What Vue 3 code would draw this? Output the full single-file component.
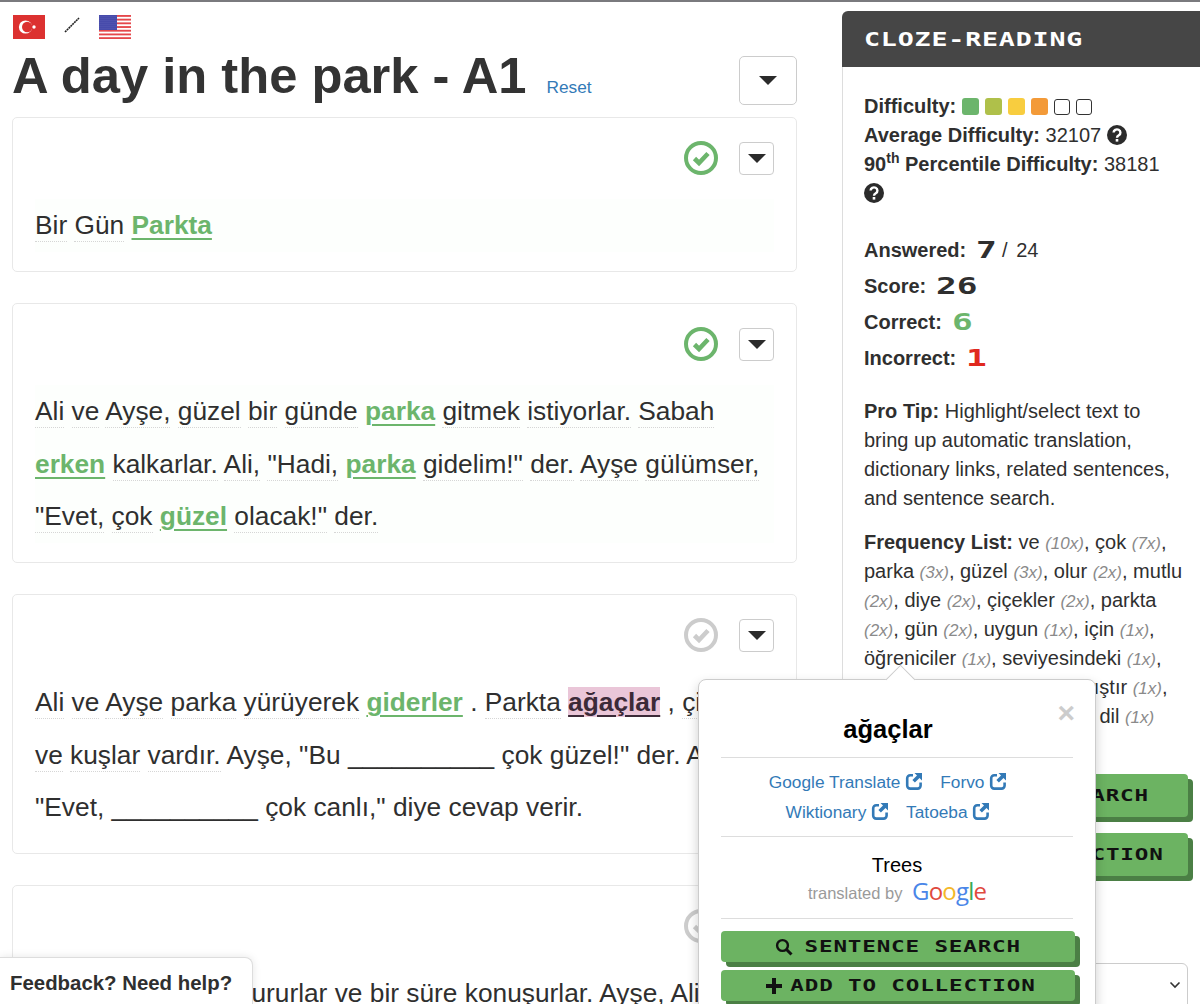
<template>
  <div class="page">
    <main class="reader">
      <div class="flags">
        <svg class="flag" viewBox="0 0 32 24">
          <rect width="32" height="24" fill="#dc3130" />
          <circle cx="12.5" cy="12" r="6.6" fill="#fff" />
          <circle cx="14.2" cy="12" r="5.2" fill="#dc3130" />
          <circle cx="21" cy="12" r="1.7" fill="#fff" />
        </svg>
        <svg class="slash" viewBox="0 0 16 16">
          <line x1="1" y1="15" x2="15" y2="1" stroke="#222" stroke-width="1.6" stroke-dasharray="2 0.6" />
        </svg>
        <svg class="flag" viewBox="0 0 32 24">
          <defs>
            <pattern id="stars" width="2" height="2" patternUnits="userSpaceOnUse">
              <rect width="2" height="2" fill="#33379f" />
              <circle cx="1" cy="1" r="0.55" fill="#9ea3e0" />
            </pattern>
          </defs>
          <rect width="32" height="24" fill="#fff" />
          <rect v-for="n in 7" :key="n" x="0" :y="(n - 1) * 3.7" width="32" height="1.85" fill="#e5474b" />
          <rect width="18" height="15" fill="url(#stars)" />
        </svg>
      </div>

      <div class="title-row">
        <h1>A day in the park - A1</h1>
        <a class="reset">Reset</a>
        <button class="caret-btn big"><span class="caret"></span></button>
      </div>

      <section v-for="(card, i) in cards" :key="i" class="card">
        <div class="card-head">
          <svg class="check" :class="{ done: card.done }" viewBox="0 0 34 34">
            <circle cx="17" cy="17" r="15" fill="none" stroke="currentColor" stroke-width="4" />
            <polyline points="10.5,17.5 15,22 24,12.5" fill="none" stroke="currentColor" stroke-width="4.6" />
          </svg>
          <button class="caret-btn"><span class="caret"></span></button>
        </div>
        <p class="story" :class="{ tinted: card.done }">
          <template v-for="(w, j) in card.words" :key="j"><span :class="w.cls">{{ w.text }}</span>{{ ' ' }}</template>
        </p>
      </section>
    </main>

    <aside class="side">
      <div class="side-head"><span class="pixel wide head-text">CLOZE-READING</span></div>
      <div class="side-body">
        <div class="stats">
          <div class="difficulty">
            <b>Difficulty:</b>
            <span v-for="c in levels" :key="c" class="level" :style="{ background: c }"></span>
            <span class="level empty"></span>
            <span class="level empty"></span>
          </div>
          <div><b>Average Difficulty:</b> 32107 <svg class="help" viewBox="0 0 20 20"><circle cx="10" cy="10" r="10" fill="#2b2b2b" /><path d="M6.6 7.6a3.4 3.2 0 1 1 5.2 2.7c-1.2.7-1.8 1.2-1.8 2.4" fill="none" stroke="#fff" stroke-width="2.4" /><rect x="8.7" y="14" width="2.6" height="2.6" fill="#fff" /></svg></div>
          <div><b>90<sup>th</sup> Percentile Difficulty:</b> 38181 <svg class="help" viewBox="0 0 20 20"><circle cx="10" cy="10" r="10" fill="#2b2b2b" /><path d="M6.6 7.6a3.4 3.2 0 1 1 5.2 2.7c-1.2.7-1.8 1.2-1.8 2.4" fill="none" stroke="#fff" stroke-width="2.4" /><rect x="8.7" y="14" width="2.6" height="2.6" fill="#fff" /></svg></div>
        </div>

        <div class="scores">
          <div><b>Answered:</b><span class="pixel num">7</span><span class="total">/ 24</span></div>
          <div><b>Score:</b><span class="pixel num">26</span></div>
          <div><b>Correct:</b><span class="pixel num good">6</span></div>
          <div><b>Incorrect:</b><span class="pixel num bad">1</span></div>
        </div>

        <p class="tip"><b>Pro Tip:</b> Highlight/select text to bring up automatic translation, dictionary links, related sentences, and sentence search.</p>

        <p class="freq">
          <b>Frequency List:</b>{{ ' ' }}
          <template v-for="(f, i) in frequency" :key="f[0]">{{ f[0] }} <i>({{ f[1] }}x)</i>{{ i < frequency.length - 1 ? ', ' : '' }}</template>
        </p>

        <button class="game-btn first">
          <svg class="btn-icon" viewBox="0 0 18 18"><circle cx="7.5" cy="7.5" r="5.4" fill="none" stroke="#111" stroke-width="2.4" /><line x1="11.5" y1="11.5" x2="16.5" y2="16.5" stroke="#111" stroke-width="3" /></svg>
          <span class="pixel wide">SENTENCE SEARCH</span>
        </button>
        <button class="game-btn second">
          <svg class="btn-icon" viewBox="0 0 18 18"><path d="M7 1h4v6h6v4h-6v6H7v-6H1V7h6z" fill="#111" /></svg>
          <span class="pixel wide">ADD TO COLLECTION</span>
        </button>

        <div class="select-box">
          <svg viewBox="0 0 12 8"><polyline points="1.5,1.5 6,6 10.5,1.5" fill="none" stroke="#333" stroke-width="1.6" /></svg>
        </div>
      </div>
    </aside>

    <div class="popover">
      <span class="pop-arrow"></span>
      <span class="pop-close">×</span>
      <div class="pop-word">ağaçlar</div>
      <hr />
      <div class="pop-links">
        <div v-for="(row, i) in linkRows" :key="i" class="link-row">
          <a v-for="l in row" :key="l">{{ l }}
            <svg class="ext" viewBox="0 0 18 18">
              <path d="M8 3.2H5.2a3 3 0 0 0-3 3v7.4a3 3 0 0 0 3 3h7.4a3 3 0 0 0 3-3v-3" fill="none" stroke="currentColor" stroke-width="2.6" />
              <path d="M9.5 1h7.5v7.5l-2.5-2.5-4.6 4.6-2.5-2.5 4.6-4.6z" fill="currentColor" />
            </svg>
          </a>
        </div>
      </div>
      <hr />
      <div class="pop-trans">
        <div class="trees">Trees</div>
        <div class="by">translated by <span class="google"><span class="g-b">G</span><span class="g-r">o</span><span class="g-y">o</span><span class="g-b">g</span><span class="g-g">l</span><span class="g-r">e</span></span></div>
      </div>
      <hr />
      <button class="game-btn small">
        <svg class="btn-icon" viewBox="0 0 18 18"><circle cx="7.5" cy="7.5" r="5.4" fill="none" stroke="#111" stroke-width="2.4" /><line x1="11.5" y1="11.5" x2="16.5" y2="16.5" stroke="#111" stroke-width="3" /></svg>
        <span class="pixel wide">SENTENCE SEARCH</span>
      </button>
      <button class="game-btn small">
        <svg class="btn-icon" viewBox="0 0 18 18"><path d="M7 1h4v6h6v4h-6v6H7v-6H1V7h6z" fill="#111" /></svg>
        <span class="pixel wide">ADD TO COLLECTION</span>
      </button>
    </div>

    <div class="feedback">Feedback? Need help?</div>
  </div>
</template>

<script setup>
// prefix: * correct answer, ! selected wrong answer, ~ plain word, none = dotted word
const parse = (str) =>
  str.split(' ').map((raw) => {
    if (raw[0] === '*') return { text: raw.slice(1), cls: 'correct' }
    if (raw[0] === '!') return { text: raw.slice(1), cls: 'selected' }
    if (raw[0] === '~') return { text: raw.slice(1), cls: '' }
    return { text: raw, cls: 'word' }
  })

const blank = '~__________'

const cards = [
  { done: true, words: parse('Bir Gün *Parkta') },
  {
    done: true,
    words: parse('Ali ve Ayşe, güzel bir günde *parka gitmek istiyorlar. Sabah *erken kalkarlar. Ali, "Hadi, *parka gidelim!" der. Ayşe gülümser, "Evet, çok *güzel olacak!" der.')
  },
  {
    done: false,
    words: parse(`Ali ve Ayşe parka yürüyerek *giderler ~. Parkta !ağaçlar ~, çiçekler ve kuşlar vardır. ~Ayşe, ~"Bu ${blank} ~çok ~güzel!" ~der. ~Ali, ~"Evet, ${blank} ~çok ~canlı," ~diye ~cevap ~verir.`)
  },
  {
    done: false,
    words: parse('~Sonra ~bir ~parkta ~otururlar ~ve ~bir ~süre ~konuşurlar. ~Ayşe, ~Ali\'ye ~bakar.')
  }
]

const levels = ['#6cb56c', '#afc04a', '#f8cd3f', '#f39a38']

const frequency = [
  ['ve', 10], ['çok', 7], ['parka', 3], ['güzel', 3], ['olur', 2], ['mutlu', 2], ['diye', 2],
  ['çiçekler', 2], ['parkta', 2], ['gün', 2], ['uygun', 1], ['için', 1], ['öğreniciler', 1],
  ['seviyesindeki', 1], ['A1', 1], ['yol', 1], ['hazırlanmıştır', 1], ['türkçe', 1], ['öğrenenin', 1], ['dil', 1]
]

const linkRows = [
  ['Google Translate', 'Forvo'],
  ['Wiktionary', 'Tatoeba']
]
</script>

<style>
html, body {
  margin: 0;
  background: #fff;
}
</style>

<style scoped>
.page {
  position: relative;
  display: flex;
  height: 1004px;
  overflow: hidden;
  box-sizing: border-box;
  border-top: 2px solid #7a7a7e;
  font-family: "Liberation Sans", Arial, sans-serif;
  color: #2f2f2f;
}

.reader {
  width: 785px;
  margin-left: 12px;
  flex-shrink: 0;
}

.flags {
  display: flex;
  align-items: center;
  gap: 19px;
  padding: 13px 0 0 1px;
}

.flag {
  width: 32px;
  height: 24px;
}

.slash {
  width: 16px;
  height: 16px;
  margin-bottom: 4px;
}

.title-row {
  display: flex;
  align-items: center;
  height: 50px;
  margin-top: 16px;
  margin-bottom: 12px;
}

h1 {
  margin: 0 0 8px;
  font-size: 50.7px;
  line-height: 50px;
  font-weight: 700;
  color: #333;
  white-space: nowrap;
}

.reset {
  margin: 15px 0 0 20px;
  font-size: 17.3px;
  color: #337ab7;
}

.caret-btn {
  display: flex;
  align-items: center;
  justify-content: center;
  width: 35px;
  height: 33px;
  padding: 0;
  background: #fff;
  border: 1px solid #ccc;
  border-radius: 4px;
}

.caret-btn.big {
  width: 58px;
  height: 49px;
  margin-left: auto;
  border-radius: 5px;
}

.caret {
  width: 0;
  height: 0;
  border-left: 9px solid transparent;
  border-right: 9px solid transparent;
  border-top: 9px solid #2b2b2b;
}

.card {
  box-sizing: border-box;
  padding: 23px 22px 19.5px;
  margin-bottom: 31px;
  border: 1px solid #e8e8e8;
  border-radius: 5px;
  background: #fff;
}

.card-head {
  display: flex;
  align-items: center;
  justify-content: flex-end;
  gap: 21px;
  margin-bottom: 24px;
}

.check {
  width: 34px;
  height: 34px;
  color: #ccc;
}

.check.done {
  color: #6cb56c;
}

.story {
  margin: 0;
  font-size: 26.3px;
  line-height: 52.5px;
  color: #2f2f2f;
}

.story.tinted {
  background: #fdfffd;
}

.word {
  border-bottom: 1px dotted #d6d6d6;
  padding-bottom: 1px;
}

.correct {
  font-weight: 700;
  color: #6cb56c;
  text-decoration: underline solid #6cb56c 2px;
  text-underline-offset: 4px;
}

.selected {
  font-weight: 700;
  color: #3c2a38;
  background: #eac6d8;
  text-decoration: underline solid #3c2a38 2px;
  text-underline-offset: 4px;
}

.side {
  width: 358px;
  margin: 9px 0 0 45px;
  flex-shrink: 0;
  font-size: 20px;
  line-height: 29px;
}

.side-head {
  display: flex;
  align-items: center;
  height: 56px;
  padding-left: 22px;
  background: #464646;
  border-top-left-radius: 6px;
  color: #fff;
}

.side-body {
  box-sizing: border-box;
  padding: 25px 17px 0 21px;
  border-left: 1px solid #ddd;
  height: 940px;
}

.pixel {
  font-family: "DejaVu Sans Mono", monospace;
  font-weight: 700;
}

.wide {
  display: inline-block;
  margin: 0 31px;
  font-size: 16px;
  line-height: 1;
  letter-spacing: 0.6px;
  white-space: nowrap;
  transform: scaleX(1.41);
}

.head-text {
  margin: 0;
  font-size: 19px;
  transform: scaleX(1.4);
  transform-origin: left center;
}

.difficulty {
  display: flex;
  align-items: center;
  gap: 6px;
}

.level {
  width: 17px;
  height: 17px;
  border-radius: 3px;
}

.level.empty {
  box-sizing: border-box;
  width: 16px;
  height: 16px;
  border: 1px solid #333;
}

sup {
  font-size: 14px;
  line-height: 0;
}

.help {
  width: 20px;
  height: 20px;
  vertical-align: -3px;
}

.scores {
  margin-top: 24px;
}

.scores div {
  display: flex;
  align-items: center;
  gap: 10px;
  height: 36px;
}

.num {
  font-size: 23px;
  line-height: 1;
  display: inline-block;
  transform: scaleX(1.5);
  transform-origin: left center;
}

.total {
  margin-left: 2px;
  word-spacing: 3px;
}

.good {
  color: #6cb56c;
}

.bad {
  color: #e0281e;
}

.tip {
  margin: 21px 0 0;
}

.freq {
  margin: 15px 0 0;
}

.freq i {
  color: #8a8a8a;
  font-size: 17px;
  line-height: 1;
}

.game-btn {
  display: flex;
  align-items: center;
  justify-content: center;
  gap: 12px;
  width: 324px;
  height: 43px;
  padding: 0;
  border: none;
  border-radius: 4px;
  background: #6cb362;
  box-shadow: 5px 5px 0 #4b7f45;
  color: #111;
}

.game-btn.first {
  margin-top: 43px;
}

.game-btn.second {
  margin-top: 16px;
}

.select-box {
  display: flex;
  align-items: center;
  justify-content: flex-end;
  box-sizing: border-box;
  width: 324px;
  height: 60px;
  margin-top: 87px;
  padding: 0 6px 16px 0;
  border: 1px solid #ccc;
  border-radius: 6px;
}

.select-box svg {
  width: 12px;
  height: 8px;
}

.popover {
  position: absolute;
  left: 698px;
  top: 677px;
  width: 398px;
  height: 360px;
  box-sizing: border-box;
  padding: 34px 22px 0;
  background: #fff;
  border: 1px solid #ccc;
  border-radius: 8px;
  box-shadow: 0 5px 12px rgba(0, 0, 0, 0.2);
}

.pop-arrow {
  position: absolute;
  left: 191px;
  top: -11px;
  width: 20px;
  height: 20px;
  background: #fff;
  border-left: 1px solid #ccc;
  border-top: 1px solid #ccc;
  transform: rotate(45deg);
}

.pop-close {
  position: absolute;
  right: 20px;
  top: 18px;
  font-size: 30px;
  line-height: 30px;
  font-weight: 700;
  color: #ccc;
}

.pop-word {
  height: 30px;
  line-height: 30px;
  padding-right: 18px;
  text-align: center;
  font-size: 25.5px;
  font-weight: 700;
  color: #000;
}

hr {
  height: 1px;
  margin: 0;
  border: none;
  background: #ddd;
}

.pop-word + hr {
  margin-top: 13px;
}

.pop-links {
  padding: 9px 18px 9px 0;
}

.link-row {
  display: flex;
  justify-content: center;
  gap: 17px;
  height: 30px;
  line-height: 30px;
  font-size: 17.3px;
  color: #337ab7;
}

.ext {
  width: 18px;
  height: 18px;
  vertical-align: -2px;
}

.pop-trans {
  padding: 14px 0 15px;
  text-align: center;
}

.trees {
  font-size: 20px;
  line-height: 28px;
  color: #000;
}

.by {
  height: 24px;
  line-height: 24px;
  font-size: 16.5px;
  color: #9a9a9a;
}

.google {
  margin-left: 5px;
  font-family: "Open Sans", sans-serif;
  font-size: 24px;
  vertical-align: -1px;
  letter-spacing: -0.8px;
}

.g-b { color: #4a86e8; }
.g-r { color: #df4a3f; }
.g-y { color: #f4b829; }
.g-g { color: #38a853; }

.game-btn.small {
  width: 354px;
  height: 31px;
  margin-top: 12px;
}

.game-btn.small + .game-btn.small {
  margin-top: 8px;
}

.btn-icon {
  width: 18px;
  height: 18px;
  flex-shrink: 0;
}

.feedback {
  position: absolute;
  left: 0;
  bottom: 0;
  box-sizing: border-box;
  width: 253px;
  height: 47px;
  padding: 14px 0 0 10px;
  font-size: 20.4px;
  font-weight: 700;
  background: #fff;
  border: 1px solid #ddd;
  border-left: none;
  border-bottom: none;
  border-top-right-radius: 8px;
  box-shadow: 0 0 8px rgba(0, 0, 0, 0.1);
}
</style>
